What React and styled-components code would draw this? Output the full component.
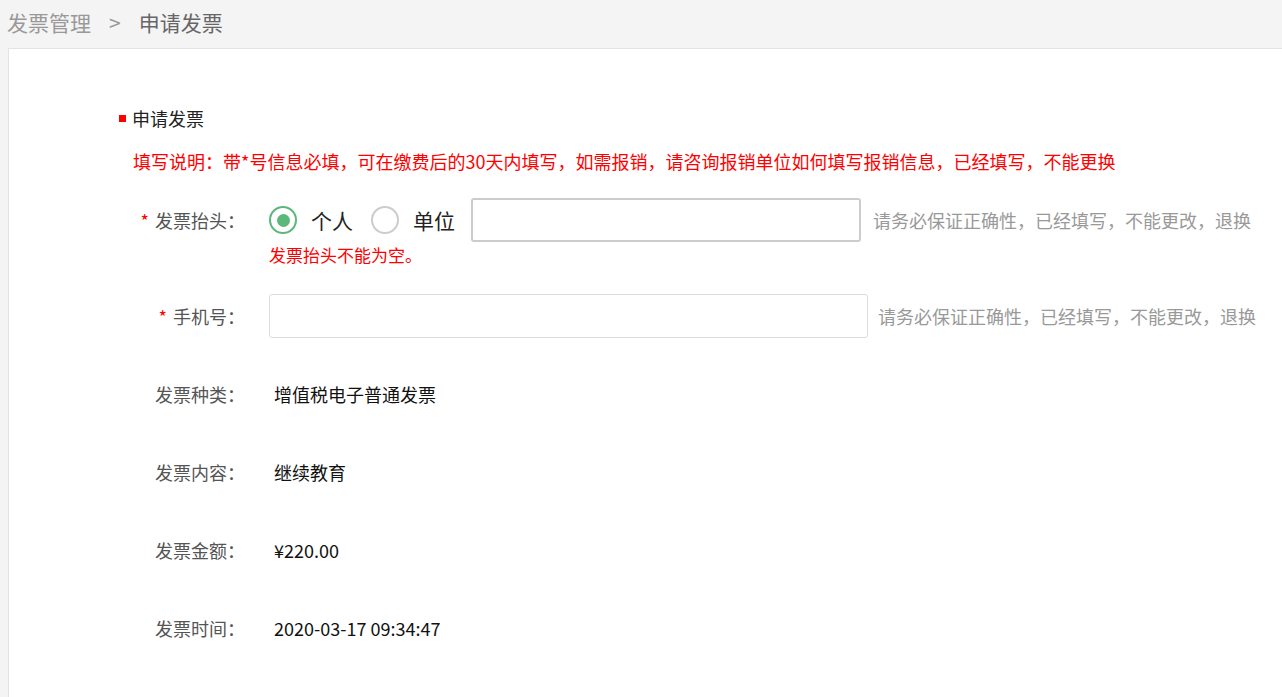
import React from 'react';
import styled, { createGlobalStyle } from 'styled-components';

const Global = createGlobalStyle`
  body { margin: 0; background: #f4f4f4; font-family: "Microsoft YaHei", "Noto Sans CJK SC", sans-serif; }
`;
const Page = styled.div`
  height: 697px;
  overflow: hidden;
  background: #f4f4f4;
`;
const Crumbs = styled.div`
  height: 44px;
  display: flex;
  align-items: center;
  padding-left: 7px;
  font-size: 21px;
  color: #999;
  gap: 18px;
`;
const Current = styled.span` color: #666; `;
const Panel = styled.div`
  margin: 4px 0 0 8px;
  background: #fff;
  border: 1px solid #e3e3e3;
  border-right: none;
  height: 700px;
  padding: 56px 0 0 110px;
`;
const Title = styled.div`
  display: flex;
  align-items: center;
  gap: 6px;
  font-size: 18px;
  color: #222;
  &::before { content: ""; width: 7px; height: 7px; background: #f00; }
`;
const Notice = styled.div`
  color: #f00;
  font-size: 18px;
  margin: 17px 0 0 14px;
`;
const Row = styled.div`
  display: flex;
  align-items: flex-start;
  margin-top: ${p => p.$top}px;
  min-height: 44px;
`;
const Label = styled.div`
  width: 126px;
  text-align: right;
  font-size: 18px;
  color: #555;
  line-height: 44px;
  flex-shrink: 0;
  margin-right: 24px;
  white-space: nowrap;
  span { color: #f00; margin-right: 6px; }
`;
const Field = styled.div`
  display: flex;
  flex-direction: column;
`;
const Line = styled.div`
  display: flex;
  align-items: center;
  height: 44px;
`;
const Radio = styled.div`
  width: 28px; height: 28px;
  border-radius: 50%;
  border: 2px solid ${p => p.$on ? '#5cb87a' : '#ccc'};
  box-sizing: border-box;
  display: flex; align-items: center; justify-content: center;
  margin-right: 14px;
  &::after { content: ""; width: 13px; height: 13px; border-radius: 50%; background: ${p => p.$on ? '#5cb87a' : 'transparent'}; }
`;
const RadioText = styled.span`
  font-size: 21px;
  color: #222;
  margin-right: ${p => p.$mr}px;
`;
const Input = styled.div`
  width: ${p => p.$w}px;
  height: 44px;
  box-sizing: border-box;
  border: ${p => p.$dark ? '2px solid #ccc' : '1px solid #ddd'};
  border-radius: 3px;
`;
const Hint = styled.span`
  font-size: 18px;
  color: #999;
  margin-left: ${p => p.$ml}px;
  white-space: nowrap;
`;
const Err = styled.div`
  color: #f00;
  font-size: 17px;
  margin-top: 0px;
`;
const Value = styled.div`
  font-size: 18px;
  color: #111;
  line-height: 44px;
  padding-left: 5px;
`;

export default function App() {
  const info = [
    ['发票种类：', '增值税电子普通发票'],
    ['发票内容：', '继续教育'],
    ['发票金额：', '¥220.00'],
    ['发票时间：', '2020-03-17 09:34:47'],
  ];
  return (
    <Page>
      <Global />
      <Crumbs><span>发票管理</span><span>&gt;</span><Current>申请发票</Current></Crumbs>
      <Panel>
        <Title>申请发票</Title>
        <Notice>填写说明：带*号信息必填，可在缴费后的30天内填写，如需报销，请咨询报销单位如何填写报销信息，已经填写，不能更换</Notice>
        <Row $top={24}>
          <Label><span>*</span>发票抬头：</Label>
          <Field>
            <Line>
              <Radio $on /><RadioText $mr={18}>个人</RadioText>
              <Radio /><RadioText $mr={16}>单位</RadioText>
              <Input $w={390} $dark />
              <Hint $ml={12}>请务必保证正确性，已经填写，不能更改，退换</Hint>
            </Line>
            <Err>发票抬头不能为空。</Err>
          </Field>
        </Row>
        <Row $top={27}>
          <Label><span>*</span>手机号：</Label>
          <Line>
            <Input $w={599} />
            <Hint $ml={10}>请务必保证正确性，已经填写，不能更改，退换</Hint>
          </Line>
        </Row>
        {info.map(([k, v], i) => (
          <Row key={k} $top={34}>
            <Label>{k}</Label>
            <Value>{v}</Value>
          </Row>
        ))}
      </Panel>
    </Page>
  );
}
